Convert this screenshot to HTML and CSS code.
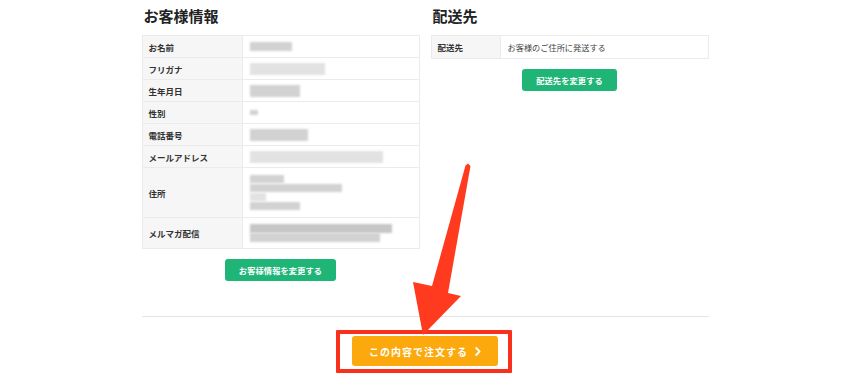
FILE: index.html
```html
<!DOCTYPE html>
<html lang="ja">
<head>
<meta charset="utf-8">
<title>ご注文内容の確認</title>
<link rel="stylesheet" href="styles.css">
</head>
<body>
<div class="page">
  <div class="cols">
    <section class="col">
      <h2 class="title">お客様情報</h2>
      <div class="info">
        <div class="row r22"><div class="lab">お名前</div><div class="val"><span class="bl w42"></span></div></div>
        <div class="row r22"><div class="lab">フリガナ</div><div class="val"><span class="bl w75 light tall"></span></div></div>
        <div class="row r22"><div class="lab">生年月日</div><div class="val"><span class="bl w50 tall"></span></div></div>
        <div class="row r22"><div class="lab">性別</div><div class="val"><span class="bl w8 small"></span></div></div>
        <div class="row r22"><div class="lab">電話番号</div><div class="val"><span class="bl w58 tall"></span></div></div>
        <div class="row r22"><div class="lab">メールアドレス</div><div class="val"><span class="bl w133 tall light"></span></div></div>
        <div class="row r50"><div class="lab">住所</div><div class="val stack"><span class="bl w34 thin"></span><span class="bl w92 thin"></span><span class="bl w16 thin light"></span><span class="bl w50 thin"></span></div></div>
        <div class="row r30 last"><div class="lab">メルマガ配信</div><div class="val stack tight"><span class="bl w142 mid dark"></span><span class="bl w130 mid"></span></div></div>
      </div>
      <div class="btnwrap"><a class="btn-green">お客様情報を変更する</a></div>
    </section>
    <section class="col">
      <h2 class="title">配送先</h2>
      <div class="info ship">
        <div class="row r22 last"><div class="lab">配送先</div><div class="val txt">お客様のご住所に発送する</div></div>
      </div>
      <div class="btnwrap"><a class="btn-green">配送先を変更する</a></div>
    </section>
  </div>
  <div class="order">
    <div class="order-inner">
      <a class="btn-order">この内容で注文する<svg class="chev" width="6" height="9" viewBox="0 0 6 9"><path d="M1.2 1 L4.6 4.5 L1.2 8" fill="none" stroke="#fff" stroke-width="1.8" stroke-linecap="round" stroke-linejoin="round"/></svg></a>
      <div class="highlight"></div>
    </div>
  </div>
</div>
<svg class="arrow" width="850" height="377" viewBox="0 0 850 377">
  <polygon points="465.5,165.5 468,163.5 470.5,166 448,293 461,296 423,335 413,282 432,286" fill="#ff3a1f"/>
</svg>
</body>
</html>
```

FILE: styles.css
```css
html, body {
  margin: 0;
  padding: 0;
  background: #ffffff;
}
body {
  font-family: "Noto Sans CJK JP", "Noto Sans", sans-serif;
  color: #333333;
  position: relative;
  width: 850px;
  height: 377px;
  overflow: hidden;
}
.page {
  width: 567px;
  margin: 0 auto;
}
.cols {
  display: grid;
  grid-template-columns: 278px 278px;
  column-gap: 11px;
}
.title {
  margin: 0 0 9px 2px;
  padding-top: 6px;
  font-size: 15px;
  line-height: 20px;
  font-weight: 700;
  color: #222222;
}
.info {
  border: 1px solid #ebebeb;
}
.row {
  display: grid;
  grid-template-columns: 100px 1fr;
  border-bottom: 1px solid #ebebeb;
  box-sizing: border-box;
}
.row.last { border-bottom: none; }
.ship .row { grid-template-columns: 69px 1fr; }
.r22 { height: 22px; }
.r50 { height: 50px; }
.r30 { height: 30px; }
.lab {
  background: #f6f6f6;
  border-right: 1px solid #ebebeb;
  font-size: 8.5px;
  font-weight: 700;
  color: #333333;
  padding-left: 6px;
  display: flex;
  align-items: center;
}
.val {
  padding-left: 7px;
  display: flex;
  align-items: center;
}
.val.txt {
  font-size: 8.2px;
  color: #444444;
}
.val.stack {
  flex-direction: column;
  align-items: flex-start;
  justify-content: center;
  gap: 1px;
}
.val.stack.tight { gap: 0; }
.bl {
  display: block;
  height: 9px;
  background: #d2d2d2;
  filter: blur(1px);
}
.bl.light { background: #e2e2e2; }
.bl.dark { background: #c6c6c6; }
.bl.tall { height: 12px; }
.bl.thin { height: 8px; }
.bl.mid { height: 9px; }
.bl.small { height: 5px; }
.w8 { width: 8px; }
.w16 { width: 16px; }
.w34 { width: 34px; }
.w42 { width: 42px; }
.w50 { width: 50px; }
.w58 { width: 58px; }
.w75 { width: 75px; }
.w92 { width: 92px; }
.w130 { width: 130px; }
.w133 { width: 133px; }
.w142 { width: 142px; }
.btnwrap {
  display: flex;
  justify-content: center;
  margin-top: 10px;
}
.btn-green {
  display: inline-block;
  height: 22px;
  line-height: 22px;
  padding: 0 14px;
  background: #1fb576;
  color: #ffffff;
  font-size: 8.2px;
  font-weight: 700;
  letter-spacing: 0.15px;
  border-radius: 3px;
}
.order {
  margin-top: 35px;
  border-top: 1px solid #e4e4e4;
  padding-top: 19px;
  display: flex;
  justify-content: center;
}
.order-inner {
  position: relative;
}
.btn-order {
  display: flex;
  align-items: center;
  justify-content: center;
  gap: 7px;
  width: 146px;
  height: 30px;
  background: #fba90c;
  color: #ffffff;
  font-size: 10px;
  font-weight: 700;
  letter-spacing: 1px;
  border-radius: 3px;
}
.chev { display: block; }
.highlight {
  position: absolute;
  left: -16px;
  top: -6px;
  width: 176px;
  height: 43px;
  box-sizing: border-box;
  border: 4px solid #f8301c;
  border-radius: 1px;
}
.arrow {
  position: absolute;
  left: 0;
  top: 0;
  pointer-events: none;
}
```
